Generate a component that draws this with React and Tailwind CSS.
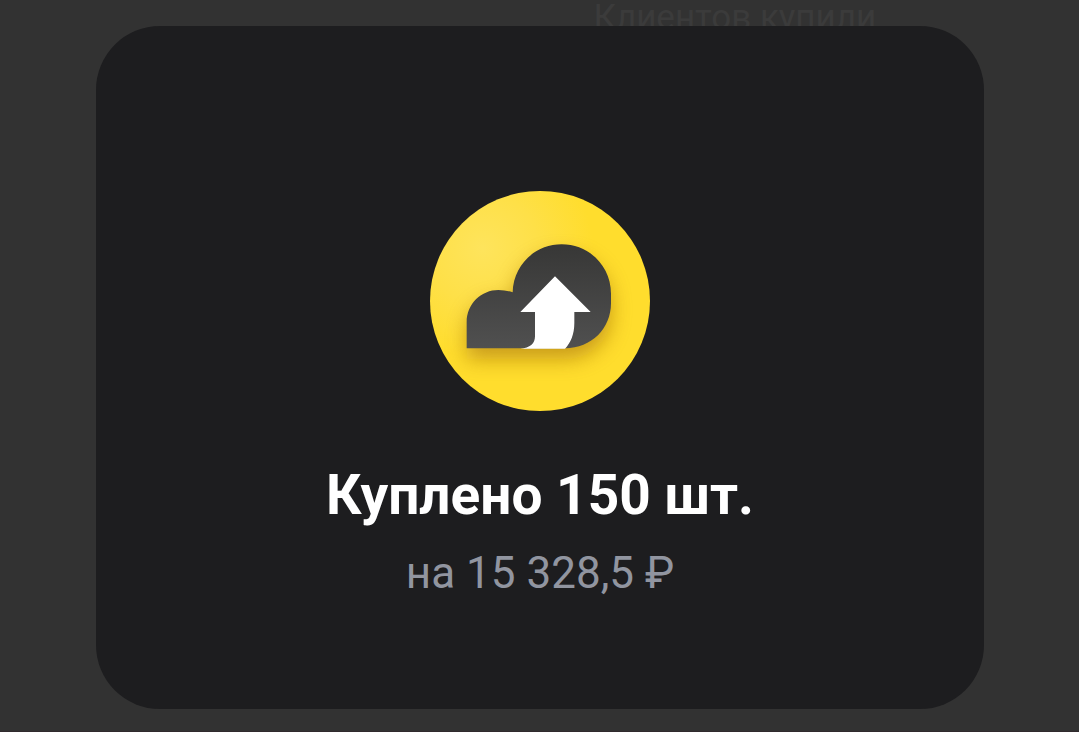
import React from "react";

// ---------------- CLOUD BADGE ----------------
const CloudBadge = () => (
  <svg
    viewBox="0 0 660 660"
    className="size-[220px] shrink-0"
    aria-hidden="true"
  >
    <defs>
      <radialGradient id="coin" cx="0.24" cy="0.26" r="0.5">
        <stop offset="0" stopColor="#fee45c" />
        <stop offset="0.5" stopColor="#fee048" />
        <stop offset="1" stopColor="#ffdd2d" />
      </radialGradient>
      <linearGradient id="cloud" x1="0" y1="0" x2="0" y2="1">
        <stop offset="0" stopColor="#373736" />
        <stop offset="1" stopColor="#505050" />
      </linearGradient>
      <clipPath id="round">
        <circle cx="330" cy="330" r="330" />
      </clipPath>
      <filter id="soft" x="-40%" y="-40%" width="180%" height="190%">
        <feGaussianBlur stdDeviation="30" />
      </filter>
    </defs>

    <g clipPath="url(#round)">
      <rect width="660" height="660" fill="url(#coin)" />
      <path
        d="M110 472V394C110 337 155 297 205 297Q228 297 248 304C250 222 315 160 395 160C478 160 543 226 543 308V337C543 412 485 472 405 472Z"
        transform="translate(0 32)"
        fill="#a87410"
        opacity="0.62"
        filter="url(#soft)"
      />
      <path
        d="M110 472V394C110 337 155 297 205 297Q228 297 248 304C250 222 315 160 395 160C478 160 543 226 543 308V337C543 412 485 472 405 472Z"
        fill="url(#cloud)"
      />
      <path
        d="M375 256L482 363H433V396C433 430 422 456 405 473H271C300 471 315 458 315 436V363H271Z"
        fill="#ffffff"
      />
    </g>
  </svg>
);

// ---------------- MAIN ----------------
export default function App() {
  return (
    <div className="relative min-h-screen overflow-hidden border-b border-[#302a2d] bg-[#323232] pr-[95px] pl-24 pt-[26px] font-['Roboto','Liberation_Sans',sans-serif]">
      {/* dimmed page under the dialog */}
      <p className="absolute top-0 left-[55%] text-[35px] leading-9 text-[#3b3b3b]">
        Клиентов купили
      </p>

      <section
        role="dialog"
        aria-labelledby="purchase-title"
        className="relative flex flex-col items-center rounded-[64px] bg-[#1d1d1f] px-8 pt-[165px] pb-[110px] text-center"
      >
        <CloudBadge />
        <h1
          id="purchase-title"
          className="mt-[52px] text-[55px] leading-[64px] font-bold text-white"
        >
          Куплено 150 шт.
        </h1>
        <p className="mt-5 text-[44px] leading-[52px] text-[#9195a0]">
          на 15 328,5 ₽
        </p>
      </section>
    </div>
  );
}
